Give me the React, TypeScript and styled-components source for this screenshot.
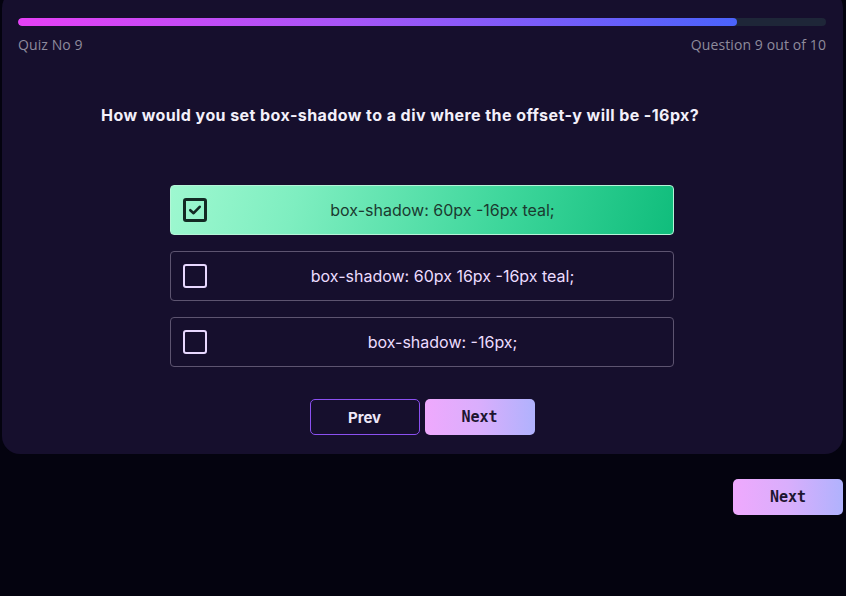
import React, { useState } from "react";
import styled, { createGlobalStyle } from "styled-components";

const Global = createGlobalStyle`
  html, body { margin: 0; padding: 0; background: #04030f; }
  body { font-family: "Inter", "Noto Sans", sans-serif; }
  * { box-sizing: border-box; }
`;

const Page = styled.div`
  width: 846px;
  height: 596px;
  background: #04030f;
  display: flex;
  flex-direction: column;
  align-items: flex-end;
`;

const Card = styled.div`
  align-self: stretch;
  margin: -10px 3px 0 2px;
  padding: 28px 17px 18px 16px;
  background: #160f2d;
  border-radius: 18px;
  display: flex;
  flex-direction: column;
  height: 464px;
`;

const Track = styled.div`
  height: 8px;
  background: #1e2638;
  border-radius: 4px;
  overflow: hidden;
`;

const Fill = styled.div`
  height: 100%;
  border-radius: 4px;
  background: linear-gradient(90deg, #e540f5 0%, #a855f7 45%, #4a63fb 100%);
`;

const Meta = styled.div`
  display: flex;
  justify-content: space-between;
  margin-top: 9px;
  font-family: "Open Sans", "Noto Sans", sans-serif;
  font-size: 14px;
  color: #8e8b9c;
  letter-spacing: 0.1px;
`;

const Question = styled.h2`
  margin: 51px 0 0 83px;
  font-size: 16px;
  font-weight: 700;
  color: #f3f0fa;
  letter-spacing: 0.43px;
`;

const Options = styled.div`
  margin: 60px auto 0;
  width: 504px;
  display: flex;
  flex-direction: column;
  gap: 16px;
`;

const Option = styled.div<{ $selected: boolean }>`
  height: 50px;
  border-radius: 4px;
  display: flex;
  align-items: center;
  padding: 0 12px;
  border: 1px solid ${(p) => (p.$selected ? "#b5f5d8" : "#5d5470")};
  background: ${(p) =>
    p.$selected
      ? "linear-gradient(105deg, #9ef8d0 0%, #7eeec0 25%, #3fd79c 65%, #10bd7c 100%)"
      : "transparent"};
  color: ${(p) => (p.$selected ? "#1b3a30" : "#ecdcff")};
  font-size: 16px;
  cursor: pointer;
`;

const Box = styled.div<{ $selected: boolean }>`
  width: 24px;
  height: 24px;
  flex: none;
  border-radius: 3px;
  border: ${(p) => (p.$selected ? "3px solid #132a24" : "2.5px solid #e8d8ff")};
  display: flex;
  align-items: center;
  justify-content: center;
`;

const OptionText = styled.span`
  flex: 1;
  text-align: center;
  padding-left: 17px;
`;

const Buttons = styled.div`
  display: flex;
  justify-content: center;
  gap: 5px;
  margin-top: 32px;
`;

const GhostButton = styled.button`
  width: 110px;
  height: 36px;
  border-radius: 5px;
  border: 1px solid #8b50f0;
  background: transparent;
  color: #eee8f8;
  font-family: "Inter", sans-serif;
  font-weight: 700;
  font-size: 15px;
  cursor: pointer;
`;

const GradButton = styled.button`
  width: 110px;
  height: 36px;
  border-radius: 5px;
  border: none;
  background: linear-gradient(90deg, #efa9fd 0%, #d9aefc 50%, #b0b2fd 100%);
  color: #1d1530;
  font-family: "DejaVu Sans Mono", "Liberation Mono", monospace;
  font-weight: 700;
  font-size: 15px;
  cursor: pointer;
`;

const Footer = styled.div`
  margin: 25px 3px 0 0;
`;

const Check = () => (
  <svg width="14" height="14" viewBox="0 0 14 14" fill="none">
    <path d="M2.3 7.2 L5.6 10.2 L11.7 3.8" stroke="#132a24" strokeWidth="2.6" strokeLinecap="round" strokeLinejoin="round" />
  </svg>
);

const options = [
  "box-shadow: 60px -16px teal;",
  "box-shadow: 60px 16px -16px teal;",
  "box-shadow: -16px;",
];

export default function App() {
  const [sel, setSel] = useState(0);
  return (
    <>
      <Global />
      <Page>
        <Card>
          <Track>
            <Fill style={{ width: "89%" }} />
          </Track>
          <Meta>
            <span>Quiz No 9</span>
            <span>Question 9 out of 10</span>
          </Meta>
          <Question>How would you set box-shadow to a div where the offset-y will be -16px?</Question>
          <Options>
            {options.map((o, i) => (
              <Option key={o} $selected={sel === i} onClick={() => setSel(i)}>
                <Box $selected={sel === i}>{sel === i && <Check />}</Box>
                <OptionText>{o}</OptionText>
              </Option>
            ))}
          </Options>
          <Buttons>
            <GhostButton>Prev</GhostButton>
            <GradButton>Next</GradButton>
          </Buttons>
        </Card>
        <Footer>
          <GradButton>Next</GradButton>
        </Footer>
      </Page>
    </>
  );
}
